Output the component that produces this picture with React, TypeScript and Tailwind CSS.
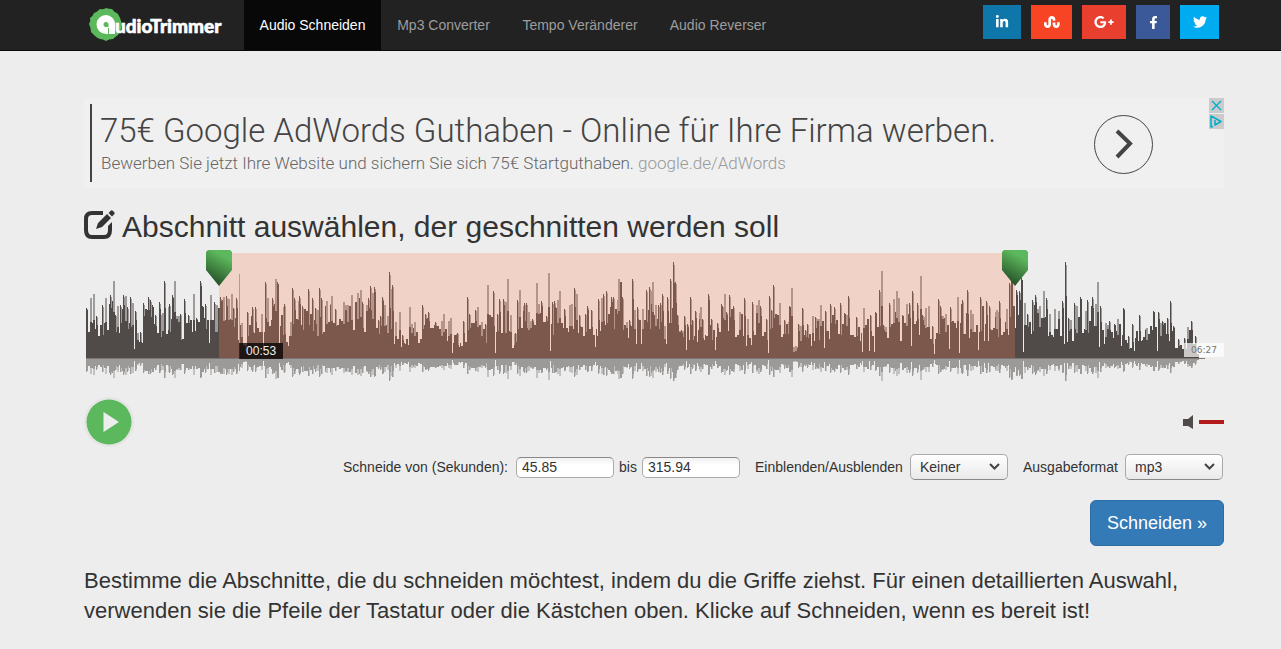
import { useState } from "react";
import {
  FaFacebookF,
  FaGooglePlusG,
  FaLinkedinIn,
  FaStumbleupon,
  FaTwitter,
} from "react-icons/fa";

const NAV = [
  { label: "Audio Schneiden", width: "w-[137px]" },
  { label: "Mp3 Converter", width: "w-[125px]" },
  { label: "Tempo Veränderer", width: "w-[148px]" },
  { label: "Audio Reverser", width: "w-[128px]" },
];

const SOCIAL = [
  { label: "LinkedIn", bg: "bg-[#0e76a8]", width: "w-[38px]", Icon: FaLinkedinIn, size: 14 },
  { label: "StumbleUpon", bg: "bg-[#f74425]", width: "w-[41px]", Icon: FaStumbleupon, size: 16 },
  { label: "Google Plus", bg: "bg-[#e93f2e]", width: "w-[44px]", Icon: FaGooglePlusG, size: 20 },
  { label: "Facebook", bg: "bg-[#3b5998]", width: "w-[34px]", Icon: FaFacebookF, size: 13 },
  { label: "Twitter", bg: "bg-[#00abf0]", width: "w-[39px]", Icon: FaTwitter, size: 14 },
];

// Track peaks as x, height pairs
const PEAKS = [
  1, 50, 5, 60, 8, 64, 11, 42, 17, 53, 20, 60, 25, 63, 28, 77, 30, 43, 32, 52, 35, 53, 38, 63, 40, 62,
  42, 51, 45, 61, 47, 55, 50, 47, 55, 26, 58, 55, 63, 61, 65, 58, 67, 53, 70, 43, 74, 56, 77, 45, 79, 77,
  84, 54, 87, 63, 89, 77, 95, 44, 99, 59, 103, 43, 108, 64, 111, 40, 115, 77, 117, 52, 120, 54, 125, 63,
  129, 56, 135, 61, 138, 61, 141, 62, 146, 64, 148, 50, 151, 60, 156, 35, 158, 13, 162, 46, 167, 51,
  170, 51, 176, 44, 180, 76, 182, 60, 187, 60, 190, 79, 192, 76, 199, 54, 205, 36, 207, 70, 209, 60,
  214, 62, 217, 52, 223, 69, 227, 60, 230, 50, 234, 70, 236, 60, 241, 57, 246, 62, 250, 49, 258, 56,
  266, 63, 272, 65, 275, 68, 277, 56, 283, 60, 285, 72, 287, 65, 289, 71, 293, 38, 295, 42, 297, 61,
  299, 53, 302, 42, 304, 86, 307, 73, 310, 36, 314, 46, 317, 23, 324, 51, 329, 36, 337, 53, 340, 44,
  343, 46, 350, 36, 356, 37, 358, 44, 363, 37, 365, 40, 372, 25, 378, 37, 382, 61, 384, 44, 390, 48,
  392, 51, 396, 36, 400, 34, 402, 73, 408, 67, 412, 44, 414, 59, 418, 59, 422, 79, 425, 43, 430, 25,
  432, 58, 434, 68, 439, 55, 441, 55, 443, 46, 447, 39, 451, 75, 456, 57, 461, 42, 463, 85, 467, 56,
  469, 57, 472, 58, 474, 67, 479, 49, 484, 53, 486, 54, 489, 70, 491, 64, 494, 43, 500, 44, 502, 52,
  506, 48, 513, 59, 516, 60, 518, 64, 521, 67, 526, 61, 528, 61, 533, 79, 535, 76, 537, 61, 544, 38,
  547, 79, 552, 51, 557, 49, 561, 68, 564, 71, 567, 76, 570, 53, 573, 53, 575, 55, 577, 64, 579, 32,
  582, 61, 585, 79, 588, 96, 590, 76, 592, 43, 596, 28, 599, 42, 602, 34, 605, 61, 607, 38, 610, 47,
  615, 51, 617, 39, 623, 64, 626, 39, 632, 35, 636, 54, 639, 64, 641, 46, 644, 63, 648, 52, 654, 46,
  659, 60, 662, 39, 667, 56, 673, 58, 675, 52, 681, 39, 684, 62, 686, 48, 688, 73, 694, 55, 699, 38,
  704, 52, 706, 70, 710, 12, 713, 34, 717, 50, 720, 28, 722, 34, 727, 42, 730, 41, 735, 53, 740, 47,
  745, 54, 749, 51, 755, 55, 759, 45, 763, 62, 771, 41, 778, 50, 785, 43, 790, 46, 794, 68, 796, 87,
  798, 33, 804, 55, 808, 59, 811, 67, 813, 60, 817, 43, 821, 54, 824, 55, 827, 67, 832, 55, 835, 82,
  837, 43, 840, 50, 843, 52, 847, 32, 853, 59, 855, 52, 860, 44, 865, 51, 872, 61, 877, 58, 882, 68,
  885, 48, 887, 44, 895, 61, 901, 57, 904, 52, 911, 48, 914, 57, 921, 49, 924, 75, 926, 85, 931, 68,
  934, 67, 936, 80, 939, 55, 942, 44, 947, 58, 950, 63, 954, 52, 958, 67, 961, 60, 964, 44, 969, 49,
  977, 57, 980, 96, 983, 40, 989, 55, 995, 61, 1000, 47, 1002, 58, 1007, 61, 1010, 54, 1012, 76,
  1015, 52, 1020, 35, 1024, 37, 1029, 34, 1032, 39, 1038, 50, 1043, 22, 1047, 34, 1054, 43, 1061, 30,
  1065, 32, 1068, 47, 1073, 46, 1077, 37, 1082, 40, 1085, 57, 1088, 32, 1093, 19, 1099, 20, 1102, 31,
  1106, 37, 1110, 22, 1114, 4,
];

const BASE = 105;

function buildWave() {
  let seed = 7;
  const rand = () => {
    seed = (seed * 16807) % 2147483647;
    return seed / 2147483647;
  };
  let solid = "";
  let soft = "";
  let mirror = "";
  let mirrorSoft = "";
  const column = (x: number, w: number, h: number, light: boolean) => {
    const low = Math.round(h / 4);
    if (light) {
      soft += `M${x} ${BASE}v${-h}h${w}v${h}z`;
      mirrorSoft += `M${x} ${BASE + 1}v${low}h${w}v${-low}z`;
    } else {
      solid += `M${x} ${BASE}v${-h}h${w}v${h}z`;
      mirror += `M${x} ${BASE + 1}v${low}h${w}v${-low}z`;
    }
  };

  for (let i = 0; i < PEAKS.length - 2; i += 2) {
    const x = PEAKS[i] + 2;
    const h = PEAKS[i + 1];
    const next = PEAKS[i + 2] + 2;
    const nextH = PEAKS[i + 3];
    const floor = Math.min(h, nextH);
    const light = h < 90 && rand() > 0.7;
    // a light peak still stands on a darker, lower body
    column(x - 1, light ? 2 : 1, h, light);
    if (light) column(x - 1, 2, Math.round(h * 0.6), false);
    else {
      column(x, 1, Math.round(h * 0.97), true);
      column(x, 1, Math.round(h * (0.4 + rand() * 0.6)), false);
    }
    for (let c = x + 1; c < next - 1; c += 2) {
      const w = Math.min(2, next - 1 - c);
      const roll = rand();
      if (roll < 0.1) {
        column(c, 1, Math.round(4 + rand() * 14), false);
        column(c + 1, w - 1, Math.round(floor * 0.6), false);
      } else {
        column(c, w, Math.round(floor * (0.4 + rand() * 0.55)), false);
      }
      if (roll > 0.85) column(c, w, Math.round(floor * 0.95), true);
    }
  }
  return { solid, soft, mirror, mirrorSoft };
}

const WAVE = buildWave();

function Logo() {
  return (
    <a href="#" aria-label="AudioTrimmer" className="flex h-[50px] w-40 items-center pl-[5px]">
      <svg width="140" height="36" viewBox="0 0 140 36">
        <path
          d="M11 2Q14 3 17 1Q20 2 23 2Q25 5 28 6Q30 8 31 11Q32 14 33 17Q32 20 32 23Q30 26 29 28Q26 30 24 32Q20 32 17 34Q14 32 11 32Q8 31 6 29Q4 27 2 25Q2 21 0 17Q2 14 1 11Q4 9 5 6Q8 5 11 2Z"
          fill="#5cb85c"
        />
        <path
          fillRule="evenodd"
          d="M17 8a9.500 9.500 0 0 0 0 19h9V17a9 9 0 0 0-9-9zM17 15a2.500 2.500 0 0 1 2.500 2.500V20H17a2.500 2.500 0 0 1 0-5z"
          fill="#fff"
        />
        <path d="M19.500 21V27" stroke="#5cb85c" strokeWidth="1" />
        <text
          x="26"
          y="26"
          fill="#fff"
          stroke="#fff"
          strokeWidth="0.6"
          className="font-['Lato',sans-serif] text-[19px] font-black"
        >
          udioTrimmer
        </text>
      </svg>
    </a>
  );
}

function AdBanner() {
  return (
    <section className="relative mt-[47px] flex h-[90px] items-center justify-between bg-[#f0f0f0] pl-[6px] pr-[71px] font-['Roboto',sans-serif] font-light">
      <div className="flex h-[78px] flex-col justify-center border-l-2 border-[#444] pl-2 pt-px">
        <a href="#" className="whitespace-nowrap text-[33px] leading-10 text-[#444]">
          75€ Google AdWords Guthaben - Online für Ihre Firma werben.
        </a>
        <p className="whitespace-nowrap pl-px text-[17px] leading-[25px] text-[#666]">
          Bewerben Sie jetzt Ihre Website und sichern Sie sich 75€ Startguthaben.{" "}
          <a href="#" className="text-[#999]">google.de/AdWords</a>
        </p>
      </div>
      <button aria-label="Öffnen" className="mt-[2px] flex size-[59px] items-center justify-center rounded-full border border-[#444]">
        <svg width="18" height="30" viewBox="0 0 18 30" fill="none" stroke="#444" strokeWidth="4">
          <path d="M2 2L15 14.500L2 28" />
        </svg>
      </button>
      <div className="absolute right-0 top-0 flex flex-col gap-px">
        <button aria-label="Schließen" className="size-[15px] bg-[#cbcbcb]">
          <svg width="15" height="15" viewBox="0 0 15 15" stroke="#00aecd" strokeWidth="1.400">
            <path d="M3 3L12 12M12 3L3 12" />
          </svg>
        </button>
        <button aria-label="AdChoices" className="size-[15px] bg-[#cbcbcb]">
          <svg width="15" height="15" viewBox="0 0 15 15" fill="none" stroke="#00aecd" strokeWidth="1.500">
            <path d="M4 12.500L2 13V2L12 7.500L6 11V6" strokeLinejoin="round" />
          </svg>
        </button>
      </div>
    </section>
  );
}

function Handle({ label, place }: { label: string; place: string }) {
  return (
    <button aria-label={label} className={`absolute top-0 -ml-[13px] h-9 w-[26px] cursor-ew-resize ${place}`}>
      <svg width="26" height="36" viewBox="0 0 26 36">
        <defs>
          <linearGradient id="handle" x1="0.700" y1="0" x2="0.300" y2="1">
            <stop offset="0.150" stopColor="#5cb85c" />
            <stop offset="0.900" stopColor="#28542a" />
          </linearGradient>
        </defs>
        <path d="M2 0H24L26 2V20L13 36L0 20V2Z" fill="url(#handle)" />
      </svg>
    </button>
  );
}

function Waveform() {
  return (
    <div className="relative mt-[5px] pt-[3px]">
      <svg
        className="block h-32 w-full"
        viewBox="0 0 1140 128"
        preserveAspectRatio="none"
        shapeRendering="crispEdges"
      >
        <path d={WAVE.soft} fill="#504a49" fillOpacity="0.5" />
        <path d={WAVE.solid} fill="#504a49" />
        <path d={WAVE.mirrorSoft} fill="#c3c2c1" />
        <path d={WAVE.mirror} fill="#9c9a98" />
        <path d={`M2 ${BASE}h1119v1h-1119z`} fill="#7c7876" />
        <rect x="135" y="0" width="796" height="105" fill="#fc8555" fillOpacity="0.25" />
      </svg>
      <div className="absolute left-[13.6%] top-6 h-[97px] w-px bg-[#ec8b50]" />
      <span className="absolute left-[13.6%] top-[93px] bg-black/75 px-[7px] text-[12px] leading-4 text-[#eee]">
        00:53
      </span>
      <span className="absolute right-0 top-[93px] bg-white/70 px-[7px] font-['DejaVu_Sans',sans-serif] text-[9px] leading-[14px] text-[#777]">
        06:27
      </span>
      <Handle label="Anfang" place="left-[11.850%]" />
      <Handle label="Ende" place="left-[81.670%]" />
    </div>
  );
}

function Select({ id, options }: { id: string; options: string[] }) {
  return (
    <span className="relative ml-[5px] inline-flex">
      <select
        id={id}
        className="h-[26px] w-[98px] appearance-none rounded-[5px] border border-[#aaa] border-b-[#888] bg-linear-to-b from-white to-[#e9e9e9] pl-[9px] text-[14px]"
      >
        {options.map((o) => (
          <option key={o}>{o}</option>
        ))}
      </select>
      <svg
        className="pointer-events-none absolute right-2 top-[9px]"
        width="11"
        height="8"
        viewBox="0 0 11 8"
        fill="none"
        stroke="#444"
        strokeWidth="2"
      >
        <path d="M1 1L5.500 5.500L10 1" />
      </svg>
    </span>
  );
}

export default function App() {
  const [from, setFrom] = useState("45.85");
  const [to, setTo] = useState("315.94");
  const field =
    "h-[21px] w-[98px] rounded-[5px] border border-[#aaa] border-t-[#888] bg-linear-to-b from-[#f1f1f1] to-white to-40% px-[5px] text-[14px]";

  return (
    <div className="min-h-screen bg-[#ededed] font-['Liberation_Sans',Arial,sans-serif] text-[#333]">
      <header className="flex justify-between border-b border-[#080808] bg-[#222] pl-[84px] pr-[62px]">
        <div className="flex">
          <Logo />
          <nav className="flex">
            {NAV.map((item, i) => (
              <a
                key={item.label}
                href="#"
                className={`text-center text-[14px] leading-[50px] whitespace-nowrap ${item.width} ${
                  i === 0 ? "bg-[#080808] text-white" : "text-[#9d9d9d]"
                }`}
              >
                {item.label}
              </a>
            ))}
          </nav>
        </div>
        <div className="flex gap-[10px] pt-[5px]">
          {SOCIAL.map(({ label, bg, width, Icon, size }) => (
            <a
              key={label}
              href="#"
              aria-label={label}
              className={`flex h-[34px] items-center justify-center text-white ${bg} ${width}`}
            >
              <Icon size={size} />
            </a>
          ))}
        </div>
      </header>

      <main className="pl-[84px] pr-[57px]">
        <AdBanner />

        <h1 className="mt-5 flex h-[37px] items-center text-[30px] leading-9">
          <svg className="mr-[7px] mb-1" width="31" height="30" viewBox="0 0 31 30">
            <path
              d="M19 3H8Q2 3 2 9V20Q2 27 8 27H20Q26 27 26 20V16"
              fill="none"
              stroke="#333"
              strokeWidth="4"
            />
            <path d="M12 19L14 13L23 4L27 8L18 17ZM24.500 3L27 0.500Q28 0 29 1L30.500 2.500Q31 3.500 30 4.500L28 6.500Z" fill="#333" />
            <path d="M24 16L28 12V18H24Z" fill="#333" />
          </svg>
          Abschnitt auswählen, der geschnitten werden soll
        </h1>

        <Waveform />

        <div className="mt-4 flex h-[50px] items-center justify-between">
          <button aria-label="Abspielen" className="flex size-[50px] items-center justify-center rounded-full bg-[#e4e4e4]">
            <svg width="46" height="46" viewBox="0 0 46 46">
              <circle cx="23" cy="23" r="22.500" fill="#5cb85c" />
              <path d="M17.500 13V33L33 23Z" fill="#ededed" />
            </svg>
          </button>
          <div className="flex items-center gap-[6px]">
            <button aria-label="Stumm">
              <svg className="block" width="10" height="14" viewBox="0 0 10 14">
                <path d="M0 4H5L10 0V14L5 11H0Z" fill="#504a49" />
              </svg>
            </button>
            <div className="h-1 w-[25px] bg-[#b31b1b]" />
          </div>
        </div>

        <form className="mt-[7px] flex h-[26px] items-center justify-end pr-px text-[14px] whitespace-nowrap">
          <label htmlFor="from" className="w-[168px]">Schneide von (Sekunden):</label>
          <input id="from" className={`ml-[5px] ${field}`} value={from} onChange={(e) => setFrom(e.target.value)} />
          <label htmlFor="to" className="ml-[5px] w-[18px]">bis</label>
          <input id="to" className={`ml-[5px] ${field}`} value={to} onChange={(e) => setTo(e.target.value)} />
          <label htmlFor="fade" className="ml-[15px] w-[150px]">Einblenden/Ausblenden</label>
          <Select id="fade" options={["Keiner", "Einblenden", "Ausblenden"]} />
          <label htmlFor="format" className="ml-[15px] w-[97px]">Ausgabeformat</label>
          <Select id="format" options={["mp3", "m4r", "wav"]} />
        </form>

        <div className="mt-5 flex justify-end">
          <button className="h-[46px] rounded-md border border-[#2e6da4] bg-[#337ab7] px-4 text-[18px] text-white">
            Schneiden »
          </button>
        </div>

        <p className="mt-5 pb-6 text-[22px] leading-[30px]">
          Bestimme die Abschnitte, die du schneiden möchtest, indem du die Griffe ziehst. Für einen detaillierten Auswahl,
          verwenden sie die Pfeile der Tastatur oder die Kästchen oben. Klicke auf Schneiden, wenn es bereit ist!
        </p>
      </main>
    </div>
  );
}
